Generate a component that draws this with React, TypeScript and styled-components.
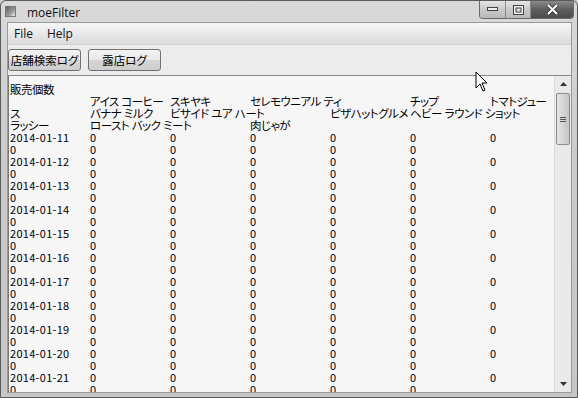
import React from 'react';
import styled, { createGlobalStyle } from 'styled-components';

const Global = createGlobalStyle`
	html, body {
		margin: 0;
		padding: 0;
		background: #cfcfcf;
	}
`;

const Window = styled.div`
	position: relative;
	width: 578px;
	height: 398px;
	box-sizing: border-box;
	border: 1px solid #5a5a5a;
	border-radius: 6px 6px 0 0;
	background: linear-gradient(180deg, #d9d9d9 0%, #cbcbcb 40%, #c6c6c6 100%);
	display: flex;
	flex-direction: column;
	overflow: hidden;
	font-family: 'Open Sans', 'Liberation Sans', sans-serif;
`;

const TitleBar = styled.div`
	height: 21px;
	display: flex;
	align-items: flex-start;
	padding-left: 4px;
`;

const AppIcon = styled.div`
	width: 9px;
	height: 9px;
	margin-top: 5px;
	border: 1px solid #777;
	background: linear-gradient(135deg, #666 0%, #999 60%, #eee 100%);
`;

const Title = styled.div`
	margin-left: 11px;
	margin-top: 3px;
	font-size: 12px;
	color: #111;
`;

const Controls = styled.div`
	margin-left: auto;
	margin-right: 3px;
	display: flex;
	border: 1px solid #6a6a6a;
	border-top: none;
	border-radius: 0 0 4px 4px;
	overflow: hidden;
	height: 17px;
`;

const CtrlButton = styled.div<{ w: number; dark?: boolean }>`
	width: ${p => p.w}px;
	height: 100%;
	display: flex;
	align-items: center;
	justify-content: center;
	border-left: 1px solid #8a8a8a;
	background: ${p =>
		p.dark
			? 'linear-gradient(180deg, #8a8a8a 0%, #5e5e5e 50%, #4a4a4a 100%)'
			: 'linear-gradient(180deg, #e6e6e6 0%, #c9c9c9 50%, #b9b9b9 100%)'};
	&:first-child {
		border-left: none;
	}
`;

const Client = styled.div`
	flex: 1;
	margin: 0 5px 4px 6px;
	display: flex;
	flex-direction: column;
	background: #ececec;
	border: 1px solid #9a9a9a;
	min-height: 0;
`;

const MenuBar = styled.div`
	height: 21px;
	display: flex;
	align-items: center;
	gap: 14px;
	padding-left: 6px;
	background: linear-gradient(180deg, #f6f6f6 0%, #e6e6e6 60%, #dcdcdc 100%);
	border-bottom: 1px solid #cfcfcf;
	font-size: 12px;
	color: #111;
`;

const ToolBar = styled.div`
	height: 30px;
	display: flex;
	align-items: center;
	gap: 7px;
	border-bottom: 1px solid #8a8a8a;
	background: #ececec;
`;

const ToolButton = styled.button<{ w: number }>`
	width: ${p => p.w}px;
	height: 22px;
	padding: 0;
	border: 1px solid #707070;
	border-radius: 3px;
	background: linear-gradient(180deg, #f2f2f2 0%, #e8e8e8 50%, #d6d6d6 51%, #cdcdcd 100%);
	font-family: 'Noto Sans CJK JP', sans-serif;
	font-feature-settings: 'palt';
	font-size: 11.5px;
	white-space: nowrap;
	color: #000;
	line-height: 20px;
`;

const TextBox = styled.div`
	flex: 1;
	display: flex;
	min-height: 0;
	background: #f6f6f6;
	border-left: 1px solid #7a7a7a;
`;

const Content = styled.div`
	flex: 1;
	overflow: hidden;
	padding: 7px 0 0 1px;
	font-family: 'Noto Sans CJK JP', sans-serif;
	font-feature-settings: 'palt';
	font-size: 12px;
	color: #000;
`;

const Row = styled.div`
	display: grid;
	grid-template-columns: repeat(7, 80px);
	height: 12px;
	line-height: 12px;
	white-space: nowrap;
`;

const Cell = styled.span<{ num?: boolean }>`
	font-size: ${p => (p.num ? '11px' : '11.5px')};
	letter-spacing: ${p => (p.num ? '0.3px' : '-0.5px')};
	word-spacing: ${p => (p.num ? '0' : '0.5px')};
`;

const ScrollBar = styled.div`
	width: 16px;
	display: flex;
	flex-direction: column;
	background: #e9e9e9;
	border-left: 1px solid #dcdcdc;
`;

const Arrow = styled.div`
	height: 16px;
	display: flex;
	align-items: center;
	justify-content: center;
`;

const Thumb = styled.div`
	height: 50px;
	margin: 1px 1px 0 1px;
	border: 1px solid #8c8c8c;
	border-radius: 2px;
	background: linear-gradient(90deg, #e4e4e4 0%, #d2d2d2 60%, #c4c4c4 100%);
	display: flex;
	flex-direction: column;
	align-items: center;
	justify-content: center;
	gap: 1px;
`;

const Grip = styled.div`
	width: 6px;
	height: 1px;
	background: #555;
`;

const Track = styled.div`
	flex: 1;
`;

const Cursor = styled.svg`
	position: absolute;
	left: 474px;
	top: 70px;
`;

const header: string[][] = [
	['販売個数'],
	['', 'アイス コーヒー', 'スキヤキ', 'セレモウニアル ティ', '', 'チップ', 'トマトジュー'],
	['ス', 'バナナ ミルク', 'ビサイド ユア ハート', '', 'ピザハットグルメ', 'ヘビー ラウンド ショット'],
	['ラッシー', 'ロースト バック ミート', '', '肉じゃが'],
];

const rows: string[][] = [];
for (let d = 11; d <= 22; d++) {
	rows.push([`2014-01-${d}`, '0', '0', '0', '0', '0', '0']);
	rows.push(['0', '0', '0', '0', '0', '0']);
}

export default function App() {
	return (
		<>
			<Global />
			<Window>
				<TitleBar>
					<AppIcon />
					<Title>moeFilter</Title>
					<Controls>
						<CtrlButton w={25}>
							<svg width="11" height="5" viewBox="0 0 11 5">
								<rect x="0.5" y="0.5" width="10" height="3" fill="#eee" stroke="#444" />
							</svg>
						</CtrlButton>
						<CtrlButton w={24}>
							<svg width="11" height="10" viewBox="0 0 11 10">
								<rect x="0.5" y="0.5" width="10" height="9" fill="#eee" stroke="#444" />
								<rect x="3" y="3" width="5" height="4" fill="#ddd" stroke="#444" />
							</svg>
						</CtrlButton>
						<CtrlButton w={42} dark>
							<svg width="13" height="11" viewBox="0 0 13 11">
								<path d="M2 1 L11 10 M11 1 L2 10" stroke="#333" strokeWidth="3.6" />
								<path d="M2 1 L11 10 M11 1 L2 10" stroke="#fff" strokeWidth="2" />
							</svg>
						</CtrlButton>
					</Controls>
				</TitleBar>
				<Client>
					<MenuBar>
						<span>File</span>
						<span>Help</span>
					</MenuBar>
					<ToolBar>
						<ToolButton w={73}>店舗検索ログ</ToolButton>
						<ToolButton w={73}>露店ログ</ToolButton>
					</ToolBar>
					<TextBox>
						<Content>
							{header.map((r, i) => (
								<Row key={'h' + i}>
									{r.map((c, j) => (
										<Cell key={j}>{c}</Cell>
									))}
								</Row>
							))}
							{rows.map((r, i) => (
								<Row key={'r' + i}>
									{r.map((c, j) => (
										<Cell key={j} num>
											{c}
										</Cell>
									))}
								</Row>
							))}
						</Content>
						<ScrollBar>
							<Arrow>
								<svg width="7" height="4" viewBox="0 0 7 4">
									<path d="M0 4 L3.5 0 L7 4 Z" fill="#333" />
								</svg>
							</Arrow>
							<Thumb>
								<Grip />
								<Grip />
								<Grip />
							</Thumb>
							<Track />
							<Arrow>
								<svg width="7" height="4" viewBox="0 0 7 4">
									<path d="M0 0 L3.5 4 L7 0 Z" fill="#333" />
								</svg>
							</Arrow>
						</ScrollBar>
					</TextBox>
				</Client>
				<Cursor width="14" height="22" viewBox="0 0 14 22">
					<path d="M1 1 L1 17 L5 13 L8 20 L10 19 L7 12 L12 12 Z" fill="#fff" stroke="#000" strokeWidth="1" />
				</Cursor>
			</Window>
		</>
	);
}
